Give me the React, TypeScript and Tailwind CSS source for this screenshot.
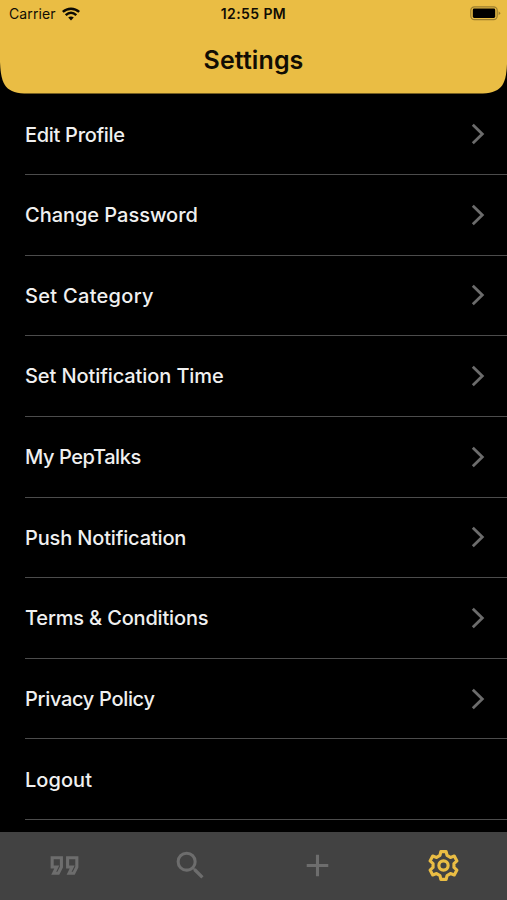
import { MdOutlineFormatQuote, MdSearch, MdAdd } from "react-icons/md";

const rows = [
  { label: "Edit Profile", cls: "tracking-[-0.3px]" },
  { label: "Change Password", cls: "tracking-[-0.03px]" },
  { label: "Set Category", cls: "tracking-[0.3px]" },
  { label: "Set Notification Time", cls: "tracking-[-0.09px]" },
  { label: "My PepTalks", cls: "tracking-[-0.42px]" },
  { label: "Push Notification", cls: "tracking-[-0.15px]" },
  { label: "Terms & Conditions", cls: "tracking-[-0.17px]" },
  { label: "Privacy Policy", cls: "tracking-[-0.32px]" },
  { label: "Logout", cls: "tracking-[0.05px]" },
];

function Wifi() {
  return (
    <svg width="18" height="14" viewBox="0 0 18 14" fill="none" stroke="#0c0a04" strokeWidth="2.5">
      <path d="M.8 4.9C5.4 .6 12.6 .6 17.2 4.9" />
      <path d="M3.7 8.2C7 5.2 11 5.2 14.3 8.2" />
      <path d="M6.2 10.6C8 9 10 9 11.8 10.6L9 13.5Z" fill="#0c0a04" stroke="none" />
    </svg>
  );
}

function Battery() {
  return (
    <svg width="31" height="15" viewBox="0 0 31 15">
      <rect x=".8" y=".8" width="26.4" height="12.9" rx="3.6" fill="none" stroke="#9a7e2e" strokeWidth="1.2" />
      <rect x="2.8" y="2.6" width="22.4" height="9.3" rx="1.4" fill="#000" />
      <path d="M28.6 5.2L30.6 7.2L28.6 9.3Z" fill="#9a7e2e" />
    </svg>
  );
}

function Gear() {
  return (
    <svg width="37" height="37" viewBox="-12 -12 24 24" fill="none" stroke="#eabd44" strokeWidth="2.05" strokeLinejoin="round">
      <path d="M-1.7 -9L1.7 -9L2.3 -6.5L4.48 -5.24L6.98 -6.11L8.7 -2.99L6.78 -1.26V1.26L8.7 2.99L6.98 6.11L4.48 5.24L2.3 6.5L1.7 9H-1.7L-2.3 6.5L-4.48 5.24L-6.98 6.11L-8.7 2.99L-6.78 1.26V-1.26L-8.7 -2.99L-6.98 -6.11L-4.48 -5.24L-2.3 -6.5Z" />
      <circle r="3" />
    </svg>
  );
}

export default function App() {
  return (
    <div className="flex h-[900px] w-[507px] flex-col overflow-hidden bg-black font-['Inter',sans-serif]">
      <header className="h-[94.3px] shrink-0 bg-[#eabd44] text-[#110d04] [clip-path:path('M0_0H507V64C506_86_501_93.5_479_93.5H28C6_93.5_1_86_0_62Z')]">
        <div className="grid h-[27px] grid-cols-3 items-center pl-[9px] pr-[6px]">
          <div className="flex items-center gap-[6px] text-[14px] tracking-[0.1px]">
            <span>Carrier</span>
            <Wifi />
          </div>
          <div className="-ml-[3px] whitespace-nowrap text-center text-[14px] font-semibold tracking-[0.4px]">12:55 PM</div>
          <div className="flex justify-end"><Battery /></div>
        </div>
        <h1 className="mt-[17px] text-center text-[25px] font-semibold leading-8 tracking-[0.1px]">Settings</h1>
      </header>
      <main className="min-h-0 flex-1 overflow-hidden pl-[25px]">
        {rows.map((r, i) => (
          <div key={r.label} className="flex h-[80.65px] items-center justify-between border-b border-[#4c4c4c] pr-[22px]">
            <span className={`pt-[0.8px] text-[20px] font-medium text-[#f0f0f0] ${r.cls}`}>{r.label}</span>
            {i < 8 && (
              <svg width="14" height="22" viewBox="0 0 14 22" fill="none" stroke="#6c6c6c" strokeWidth="2.8">
                <path d="M1.8 1.8L11.3 11L1.8 20.2" />
              </svg>
            )}
          </div>
        ))}
      </main>
      <nav className="grid h-[68px] shrink-0 grid-cols-4 place-items-center bg-[#424242] pb-[2px] pl-[1px] text-[#6d6d6d]">
        <MdOutlineFormatQuote size={37} />
        <MdSearch size={37} />
        <MdAdd size={37} />
        <Gear />
      </nav>
    </div>
  );
}
